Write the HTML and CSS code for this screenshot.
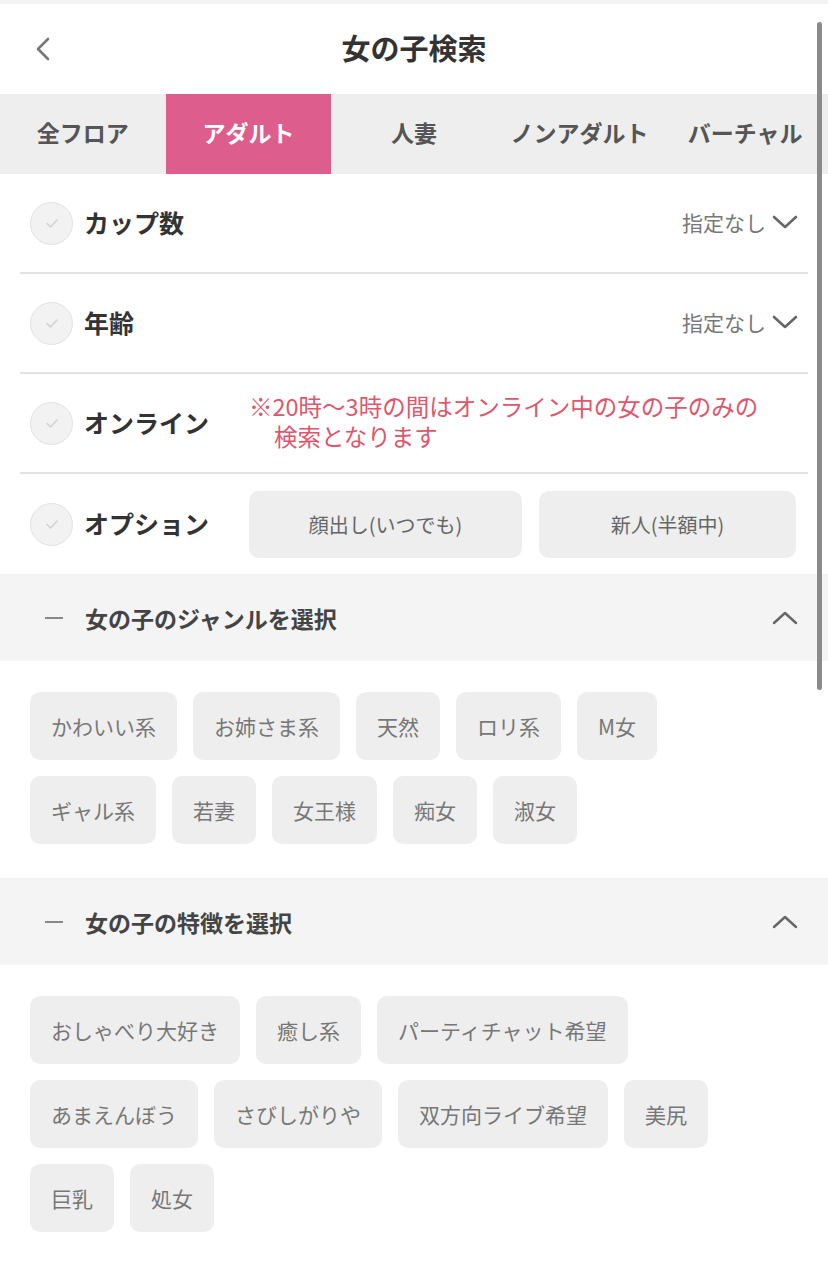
FILE: index.html
```html
<!DOCTYPE html>
<html lang="ja">
<head>
    <meta charset="UTF-8">
    <meta name="viewport" content="width=device-width, initial-scale=1.0">
    <title>女の子検索</title>
    <link rel="stylesheet" href="styles.css">
</head>
<body>

    <header class="topbar">
        <a class="back-btn" href="#">
            <svg width="16" height="24" viewBox="0 0 16 24"><polyline points="13,2 3,12 13,22" fill="none" stroke="#777" stroke-width="2.6" stroke-linecap="round" stroke-linejoin="round"/></svg>
        </a>
        <h1>女の子検索</h1>
    </header>

    <nav class="tabs">
        <a href="#" class="tab">全フロア</a>
        <a href="#" class="tab active">アダルト</a>
        <a href="#" class="tab">人妻</a>
        <a href="#" class="tab">ノンアダルト</a>
        <a href="#" class="tab">バーチャル</a>
    </nav>

    <div class="filters">
        <div class="filter-row">
            <span class="check"><svg width="20" height="20" viewBox="0 0 20 20"><polyline points="5,10.5 8.5,14 15,7" fill="none" stroke="#d2d2d2" stroke-width="1.6" stroke-linecap="round" stroke-linejoin="round"/></svg></span>
            <span class="filter-label">カップ数</span>
            <span class="filter-value">指定なし
                <svg width="26" height="16" viewBox="0 0 26 16"><polyline points="2,3 13,13 24,3" fill="none" stroke="#666" stroke-width="2.6" stroke-linecap="round" stroke-linejoin="round"/></svg>
            </span>
        </div>
        <div class="filter-row">
            <span class="check"><svg width="20" height="20" viewBox="0 0 20 20"><polyline points="5,10.5 8.5,14 15,7" fill="none" stroke="#d2d2d2" stroke-width="1.6" stroke-linecap="round" stroke-linejoin="round"/></svg></span>
            <span class="filter-label">年齢</span>
            <span class="filter-value">指定なし
                <svg width="26" height="16" viewBox="0 0 26 16"><polyline points="2,3 13,13 24,3" fill="none" stroke="#666" stroke-width="2.6" stroke-linecap="round" stroke-linejoin="round"/></svg>
            </span>
        </div>
        <div class="filter-row">
            <span class="check"><svg width="20" height="20" viewBox="0 0 20 20"><polyline points="5,10.5 8.5,14 15,7" fill="none" stroke="#d2d2d2" stroke-width="1.6" stroke-linecap="round" stroke-linejoin="round"/></svg></span>
            <span class="filter-label">オンライン</span>
            <p class="online-note">※20時〜3時の間はオンライン中の女の子のみの検索となります</p>
        </div>
        <div class="filter-row last">
            <span class="check"><svg width="20" height="20" viewBox="0 0 20 20"><polyline points="5,10.5 8.5,14 15,7" fill="none" stroke="#d2d2d2" stroke-width="1.6" stroke-linecap="round" stroke-linejoin="round"/></svg></span>
            <span class="filter-label">オプション</span>
            <div class="option-buttons">
                <button class="option-btn">顔出し(いつでも)</button>
                <button class="option-btn">新人(半額中)</button>
            </div>
        </div>
    </div>

    <section class="group">
        <div class="group-head">
            <span class="dash"></span>
            <h2>女の子のジャンルを選択</h2>
            <svg class="caret" width="26" height="16" viewBox="0 0 26 16"><polyline points="2,13 13,3 24,13" fill="none" stroke="#666" stroke-width="2.4" stroke-linecap="round" stroke-linejoin="round"/></svg>
        </div>
        <div class="tag-list">
            <span class="tag">かわいい系</span>
            <span class="tag">お姉さま系</span>
            <span class="tag">天然</span>
            <span class="tag">ロリ系</span>
            <span class="tag">M女</span>
            <span class="tag">ギャル系</span>
            <span class="tag">若妻</span>
            <span class="tag">女王様</span>
            <span class="tag">痴女</span>
            <span class="tag">淑女</span>
        </div>
    </section>

    <section class="group">
        <div class="group-head">
            <span class="dash"></span>
            <h2>女の子の特徴を選択</h2>
            <svg class="caret" width="26" height="16" viewBox="0 0 26 16"><polyline points="2,13 13,3 24,13" fill="none" stroke="#666" stroke-width="2.4" stroke-linecap="round" stroke-linejoin="round"/></svg>
        </div>
        <div class="tag-list">
            <span class="tag">おしゃべり大好き</span>
            <span class="tag">癒し系</span>
            <span class="tag">パーティチャット希望</span>
            <span class="tag">あまえんぼう</span>
            <span class="tag">さびしがりや</span>
            <span class="tag">双方向ライブ希望</span>
            <span class="tag">美尻</span>
            <span class="tag">巨乳</span>
            <span class="tag">処女</span>
        </div>
    </section>

    <div class="scrollbar"></div>

</body>
</html>
```

FILE: styles.css
```css
body {
    font-family: "Noto Sans CJK JP", "Noto Sans", sans-serif;
    background: white;
    color: #333;
    margin: 0;
    padding: 0;
}
a {
    text-decoration: none;
}
.topbar {
    border-top: 4px solid #f3f3f3;
    display: flex;
    align-items: center;
    justify-content: center;
    position: relative;
    box-sizing: border-box;
    height: 94px;
    padding-bottom: 4px;
}
.back-btn {
    position: absolute;
    left: 35px;
    top: 33px;
}
.topbar h1 {
    margin: 0;
    font-size: 29px;
    font-weight: bold;
    color: #333;
}
.tabs {
    display: grid;
    grid-template-columns: repeat(5, 1fr);
    height: 80px;
    background: #eeeeee;
}
.tab {
    display: flex;
    align-items: center;
    justify-content: center;
    font-size: 23px;
    font-weight: bold;
    color: #555;
    white-space: nowrap;
    padding-bottom: 5px;
}
.tab.active {
    background: #dd5e8d;
    color: white;
}
.filters {
    padding: 0 20px;
}
.filter-row {
    display: flex;
    align-items: center;
    height: 98px;
    border-bottom: 2px solid #e2e2e2;
    padding: 0 10px;
}
.filter-row.last {
    height: 100px;
    border-bottom: none;
}
.check {
    width: 41px;
    height: 41px;
    border-radius: 50%;
    background: #f2f2f2;
    border: 1.5px solid #e2e2e2;
    display: flex;
    align-items: center;
    justify-content: center;
    flex-shrink: 0;
}
.filter-label {
    font-size: 25px;
    font-weight: bold;
    color: #333;
    margin-left: 11px;
    width: 165px;
    flex-shrink: 0;
    padding-bottom: 3px;
}
.filter-value {
    margin-left: auto;
    font-size: 21px;
    color: #777;
    display: flex;
    align-items: center;
    gap: 6px;
    padding-bottom: 3px;
}
.online-note {
    margin: -4px 0 0;
    max-width: 500px;
    font-size: 23.5px;
    line-height: 30px;
    color: #e0566c;
    padding-left: 25px;
    text-indent: -25px;
}
.option-buttons {
    display: grid;
    grid-template-columns: 273px 257px;
    gap: 17px;
}
.option-btn {
    height: 67px;
    border: none;
    border-radius: 10px;
    background: #eeeeee;
    font-family: inherit;
    font-size: 20px;
    color: #666;
}
.group-head {
    height: 87px;
    background: #f4f4f4;
    display: flex;
    align-items: center;
    padding: 0 30px 0 45px;
}
.dash {
    width: 18px;
    height: 2px;
    background: #888;
}
.group-head h2 {
    margin: 0 0 0 22px;
    font-size: 23px;
    font-weight: bold;
    color: #444;
}
.caret {
    margin-left: auto;
}
.tag-list {
    display: flex;
    flex-wrap: wrap;
    gap: 16px;
    padding: 31px 30px 34px;
}
.tag {
    height: 68px;
    display: flex;
    align-items: center;
    padding: 0 21px;
    border-radius: 10px;
    background: #eeeeee;
    font-size: 21px;
    color: #777;
}
.scrollbar {
    position: absolute;
    top: 22px;
    left: 817px;
    width: 5px;
    height: 668px;
    border-radius: 3px;
    background: #8a8a8a;
}
```
